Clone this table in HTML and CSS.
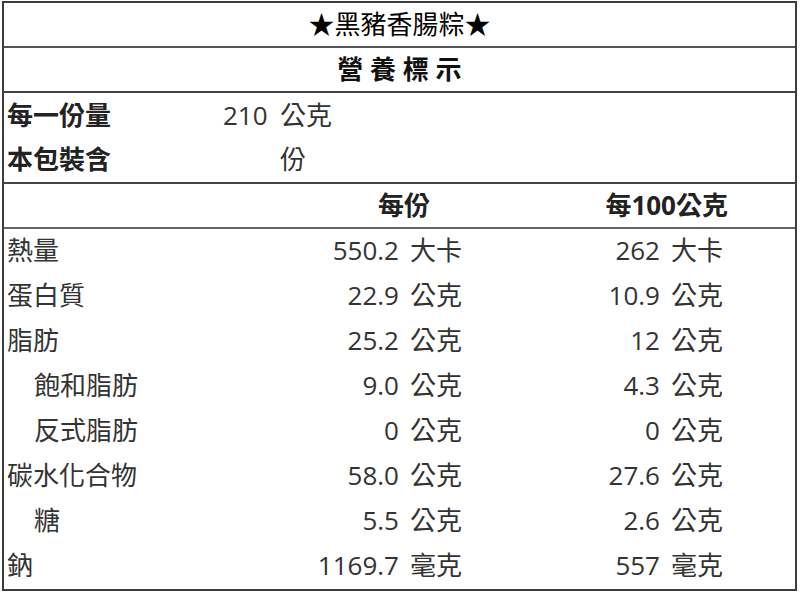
FILE: index.html
```html
<!DOCTYPE html>
<html lang="zh-Hant">
<head>
<meta charset="utf-8">
<title>營養標示</title>
<link rel="stylesheet" href="styles.css">
</head>
<body>
<div class="panel">
  <div class="title">★黑豬香腸粽★</div>
  <div class="heading">營 養 標 示</div>
  <div class="serv">
    <div class="lab b">每一份量</div>
    <div class="snum">210</div>
    <div class="sunit">公克</div>
  </div>
  <div class="serv last">
    <div class="lab b">本包裝含</div>
    <div class="snum"></div>
    <div class="sunit">份</div>
  </div>
  <div class="head">
    <div></div>
    <div class="hc">每份</div>
    <div class="hc">每100公克</div>
    <div></div>
  </div>
  <div class="row"><div class="lab">熱量</div><div class="v">550.2<span class="u">大卡</span></div><div class="v">262<span class="u">大卡</span></div><div></div></div>
  <div class="row"><div class="lab">蛋白質</div><div class="v">22.9<span class="u">公克</span></div><div class="v">10.9<span class="u">公克</span></div><div></div></div>
  <div class="row"><div class="lab">脂肪</div><div class="v">25.2<span class="u">公克</span></div><div class="v">12<span class="u">公克</span></div><div></div></div>
  <div class="row"><div class="lab sub">飽和脂肪</div><div class="v">9.0<span class="u">公克</span></div><div class="v">4.3<span class="u">公克</span></div><div></div></div>
  <div class="row"><div class="lab sub">反式脂肪</div><div class="v">0<span class="u">公克</span></div><div class="v">0<span class="u">公克</span></div><div></div></div>
  <div class="row"><div class="lab">碳水化合物</div><div class="v">58.0<span class="u">公克</span></div><div class="v">27.6<span class="u">公克</span></div><div></div></div>
  <div class="row"><div class="lab sub">糖</div><div class="v">5.5<span class="u">公克</span></div><div class="v">2.6<span class="u">公克</span></div><div></div></div>
  <div class="row"><div class="lab">鈉</div><div class="v">1169.7<span class="u">毫克</span></div><div class="v">557<span class="u">毫克</span></div><div></div></div>
</div>
</body>
</html>
```
FILE: styles.css
```css
* { box-sizing: border-box; }
html, body { margin: 0; padding: 0; background: #fff; }
body {
  width: 800px;
  height: 596px;
  overflow: hidden;
  font-family: "Open Sans", "Noto Sans CJK TC", sans-serif;
  font-size: 26px;
  line-height: 1;
  color: #333;
}
.panel {
  margin: 1px 3px 0 2px;
  width: 795px;
  border: 2px solid #3d3d3d;
}
.title {
  height: 45px;
  display: flex;
  align-items: center;
  justify-content: center;
  color: #000;
  border-bottom: 2px solid #555;
  padding-bottom: 2px;
}
.heading {
  height: 45px;
  display: flex;
  align-items: center;
  justify-content: center;
  font-weight: 700;
  color: #111;
  border-bottom: 2px solid #444;
  padding-bottom: 2px;
}
.serv {
  height: 45px;
  display: grid;
  grid-template-columns: 219px 46px 1fr;
  align-items: center;
  padding-bottom: 2px;
}
.serv.last {
  height: 46px;
  border-bottom: 2px solid #444;
}
.snum { text-align: left; }
.sunit { padding-left: 11px; }
.lab { padding-left: 3px; white-space: nowrap; }
.lab.sub { padding-left: 30px; }
.b { font-weight: 700; color: #222; }
.head {
  height: 45px;
  display: grid;
  grid-template-columns: 300px 126px 298px 1fr;
  align-items: center;
  font-weight: 700;
  color: #222;
  border-bottom: 2px solid #666;
  padding-bottom: 2px;
}
.hc { text-align: right; white-space: nowrap; }
.row {
  height: 45px;
  display: grid;
  grid-template-columns: 300px 158px 261px 1fr;
  align-items: center;
  padding-bottom: 3px;
}
.v { text-align: right; white-space: nowrap; }
.u { margin-left: 11px; }
```
